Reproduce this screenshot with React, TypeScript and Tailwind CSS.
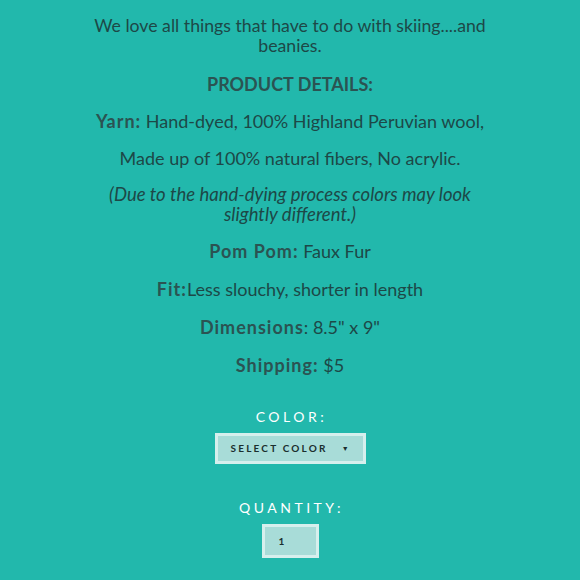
import React from "react";

export default function App() {
  const bold = "font-bold tracking-[1px] text-[#2b5352]";
  return (
    <div
      className="w-[580px] h-[580px] overflow-hidden bg-[#22b8ac] flex flex-col items-center text-[#1d4847] text-center"
      style={{ fontFamily: "Lato, 'Noto Sans', sans-serif" }}
    >
      <p className="mt-[16px] text-[17.7px] leading-[20px]">
        We love all things that have to do with skiing....and
        <br />
        beanies.
      </p>
      <p className={`mt-[18px] text-[18px] leading-[20px] font-bold text-[#2b5352]`}>PRODUCT DETAILS:</p>
      <p className="mt-[17px] text-[18px] leading-[20px]">
        <span className={bold}>Yarn:</span> Hand-dyed, 100% Highland Peruvian wool,
      </p>
      <p className="mt-[17px] text-[18px] leading-[20px]">Made up of 100% natural fibers, No acrylic.</p>
      <p className="mt-[16px] text-[18.5px] leading-[20px] italic">
        (Due to the hand-dying process colors may look
        <br />
        slightly different.)
      </p>
      <p className="mt-[17px] text-[18px] leading-[20px]">
        <span className={bold}>Pom Pom:</span> Faux Fur
      </p>
      <p className="mt-[18px] text-[18px] leading-[20px]">
        <span className={bold}>Fit:</span>Less slouchy, shorter in length
      </p>
      <p className="mt-[18px] text-[18px] leading-[20px]">
        <span className={bold}>Dimensions</span>: 8.5" x 9"
      </p>
      <p className="mt-[18px] text-[18px] leading-[20px]">
        <span className={bold}>Shipping:</span> $5
      </p>
      <p className="mt-[34px] text-[14px] leading-[16px] tracking-[3.5px] text-white pl-[3px]">COLOR:</p>
      <div className="mt-[8px] w-[151px] h-[31px] bg-[#a8dcd8] border-[3px] border-[#d6efed] flex items-center pl-[13px] text-[#1a2e2e]">
        <span className="text-[10px] font-bold tracking-[2.2px]">SELECT COLOR</span>
        <span className="ml-[14px] text-[7px]">▼</span>
      </div>
      <p className="mt-[36px] text-[14px] leading-[16px] tracking-[3.5px] text-white pl-[3px]">QUANTITY:</p>
      <div className="mt-[8px] w-[57px] h-[34px] bg-[#a8dcd8] border-[3px] border-[#d6efed] flex items-center pl-[14px] text-[#1a2e2e]">
        <span className="text-[10px] font-bold">1</span>
      </div>
    </div>
  );
}
